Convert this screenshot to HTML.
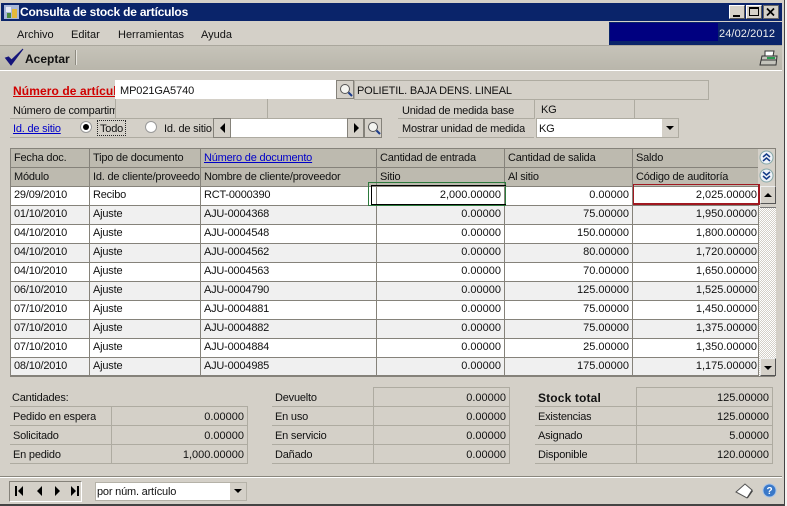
<!DOCTYPE html>
<html><head><meta charset="utf-8"><style>
html,body{margin:0;padding:0}
body{width:787px;height:506px;overflow:hidden;position:relative;background:#d4d0c8;font:11px "Liberation Sans",sans-serif;letter-spacing:-.2px;color:#111}
.a{position:absolute;box-sizing:border-box}
.t{position:absolute;white-space:nowrap;overflow:hidden;line-height:14px}
.b{position:absolute;box-sizing:border-box;border:1px solid #aeaba1}
.r{text-align:right;letter-spacing:0}
.btn{position:absolute;box-sizing:border-box;background:#d4d0c8;border:1px solid #85827a}
table{position:absolute;left:10px;top:148px;border-collapse:collapse;table-layout:fixed;width:748px}
td{box-sizing:border-box;height:19px;padding:1px 0 0 3px;border:1px solid #85827a;white-space:nowrap;overflow:hidden;line-height:14px;background:#fff;vertical-align:top}
tr.h td{background:#bdbaaf;padding-top:2px}
tr.g td{background:#f0f0f0}
td.n{text-align:right;padding:1px 3px 0 0;letter-spacing:0}
td.n:last-child{padding-right:1px}
a{color:#0000c8;text-decoration:underline}
svg{position:absolute;overflow:visible}
</style></head><body>
<div class="a" style="left:0;top:0;width:787px;height:3px;background:#d4d0c8"></div>
<div class="a" style="left:1px;top:3px;width:781px;height:18px;background:#0a246a"></div>
<svg style="left:4px;top:4px" width="16" height="16"><rect x="0" y="1" width="15" height="14" fill="#a9b8d8"/><rect x="2" y="3" width="5" height="5" fill="#e6eaf5"/><rect x="8" y="5" width="5" height="9" fill="#e2b83a"/><rect x="3" y="9" width="4" height="5" fill="#4b8a3c"/></svg>
<div class="t" style="left:20px;top:5px;color:#fff;font-weight:bold;font-size:12px">Consulta de stock de artículos</div>
<div class="btn" style="left:729px;top:5px;width:16px;height:14px;border-color:#fff #555 #555 #fff"><div class="a" style="left:3px;top:9px;width:7px;height:2px;background:#000"></div></div>
<div class="btn" style="left:746px;top:5px;width:16px;height:14px;border-color:#fff #555 #555 #fff"><div class="a" style="left:2px;top:1px;width:10px;height:9px;border:1px solid #000;border-top-width:2px"></div></div>
<svg style="left:763px;top:5px" width="16" height="14"><rect x=".5" y=".5" width="15" height="13" fill="#d4d0c8" stroke="#666"/><path d="M4 3.500l7 7M11 3.500l-7 7" stroke="#000" stroke-width="1.700"/></svg>
<div class="a" style="left:782px;top:0;width:2px;height:506px;background:#d4d0c8"></div>
<div class="a" style="left:784px;top:0;width:1px;height:506px;background:#444"></div>
<div class="a" style="left:785px;top:0;width:2px;height:506px;background:#f4f4f2"></div>

<div class="t" style="left:17px;top:28px;letter-spacing:0">Archivo</div>
<div class="t" style="left:71px;top:28px;letter-spacing:0">Editar</div>
<div class="t" style="left:118px;top:28px;letter-spacing:0">Herramientas</div>
<div class="t" style="left:201px;top:28px;letter-spacing:0">Ayuda</div>
<div class="a" style="left:609px;top:22px;width:173px;height:23px;background:#0a246a"></div>
<div class="a" style="left:610px;top:23px;width:108px;height:18px;background:#000080"></div>
<div class="t" style="left:719px;top:27px;color:#eee;letter-spacing:.1px">24/02/2012</div>

<div class="a" style="left:0;top:45px;width:782px;height:25px;background:linear-gradient(#c6c3b9,#b9b6ab);border-top:1px solid #aaa79d"></div>
<div class="a" style="left:0;top:70px;width:782px;height:1px;background:#fff"></div>
<svg style="left:4px;top:48px" width="22" height="20"><path d="M1.500 10 L7 17 L19 1 L7.500 12 L4.500 9 Z" fill="#14147a" stroke="#14147a"/></svg>
<div class="t" style="left:25px;top:52px;font-weight:bold;font-size:12px;letter-spacing:0">Aceptar</div>
<div class="a" style="left:75px;top:50px;width:2px;height:15px;border-left:1px solid #8d8a80;border-right:1px solid #e8e6e0"></div>
<svg style="left:759px;top:50px" width="20" height="17"><path d="M6 1h9l-1 5H6z" fill="#fff" stroke="#333"/><path d="M3 6h15l-1 9H1z" fill="#c4c4bc" stroke="#333"/><path d="M2 10h15" stroke="#333"/><rect x="8" y="7" width="8" height="2" fill="#2a9a50"/></svg>

<div class="t" style="left:13px;top:84px;width:102px;color:#d00000;font-weight:bold;font-size:12px;letter-spacing:.1px;text-decoration:underline">Número de artículo</div>
<div class="a" style="left:115px;top:80px;width:221px;height:19px;background:#fff"></div>
<div class="t" style="left:120px;top:84px;letter-spacing:-.1px">MP021GA5740</div>
<div class="btn" style="left:336px;top:80px;width:18px;height:19px"><svg style="left:2px;top:2px" width="14" height="14"><circle cx="6" cy="6" r="4.500" fill="#f4f4f0" stroke="#555"/><path d="M9.500 9.500l3.500 3.500" stroke="#1c3c8c" stroke-width="2"/></svg></div>
<div class="b" style="left:354px;top:80px;width:355px;height:20px"></div>
<div class="t" style="left:357px;top:84px;letter-spacing:-.15px">POLIETIL. BAJA DENS. LINEAL</div>

<div class="t" style="left:13px;top:104px;width:102px">Número de compartimiento</div>
<div class="b" style="left:115px;top:99px;width:153px;height:20px;border-top:0"></div>
<div class="t" style="left:402px;top:104px">Unidad de medida base</div>
<div class="b" style="left:534px;top:99px;width:101px;height:20px;border-top:0;border-bottom:0"></div>
<div class="t" style="left:541px;top:103px">KG</div>
<div class="a" style="left:398px;top:118px;width:136px;height:20px;border-top:1px solid #aeaba1;border-bottom:1px solid #aeaba1"></div>
<div class="a" style="left:10px;top:118px;width:372px;height:20px;border-top:1px solid #aeaba1;border-bottom:1px solid #aeaba1"></div>
<div class="t" style="left:13px;top:122px"><a>Id. de sitio</a></div>
<svg style="left:80px;top:121px" width="13" height="13"><circle cx="6" cy="6" r="5.500" fill="#fff" stroke="#999"/><circle cx="6" cy="6" r="3" fill="#000"/></svg>
<div class="a" style="left:97px;top:120px;width:29px;height:16px;border:1px dotted #222"></div>
<div class="t" style="left:100px;top:122px">Todo</div>
<svg style="left:145px;top:121px" width="13" height="13"><circle cx="6" cy="6" r="5.500" fill="#fff" stroke="#999"/></svg>
<div class="t" style="left:164px;top:122px;width:50px">Id. de sitio</div>
<div class="btn" style="left:213px;top:118px;width:18px;height:20px"><svg style="left:5px;top:4px" width="8" height="10"><path d="M6 0v10L1 5z" fill="#000"/></svg></div>
<div class="a" style="left:231px;top:119px;width:116px;height:18px;background:#fff"></div>
<div class="btn" style="left:347px;top:118px;width:17px;height:20px"><svg style="left:5px;top:4px" width="8" height="10"><path d="M1 0v10l5-5z" fill="#000"/></svg></div>
<div class="btn" style="left:364px;top:118px;width:18px;height:20px"><svg style="left:2px;top:2px" width="14" height="14"><circle cx="6" cy="6" r="4.500" fill="#f4f4f0" stroke="#555"/><path d="M9.500 9.500l3.500 3.500" stroke="#1c3c8c" stroke-width="2"/></svg></div>
<div class="t" style="left:402px;top:122px">Mostrar unidad de medida</div>
<div class="a" style="left:536px;top:118px;width:143px;height:20px;background:#fff;border:1px solid #aeaba1"></div>
<div class="t" style="left:539px;top:122px">KG</div>
<div class="a" style="left:662px;top:119px;width:16px;height:18px;background:#d4d0c8"></div>
<svg style="left:666px;top:126px" width="9" height="5"><path d="M0 0h8L4 4z" fill="#000"/></svg>

<table><colgroup><col style="width:79px"><col style="width:111px"><col style="width:176px"><col style="width:128px"><col style="width:128px"><col style="width:126px"></colgroup>
<tr class="h"><td>Fecha doc.</td><td>Tipo de documento</td><td><a>Número de documento</a></td><td>Cantidad de entrada</td><td>Cantidad de salida</td><td>Saldo</td></tr>
<tr class="h"><td>Módulo</td><td>Id. de cliente/proveedor</td><td>Nombre de cliente/proveedor</td><td>Sitio</td><td>Al sitio</td><td>Código de auditoría</td></tr>
<tr><td>29/09/2010</td><td>Recibo</td><td>RCT-0000390</td><td class="n">2,000.00000</td><td class="n">0.00000</td><td class="n">2,025.00000</td></tr>
<tr class="g"><td>01/10/2010</td><td>Ajuste</td><td>AJU-0004368</td><td class="n">0.00000</td><td class="n">75.00000</td><td class="n">1,950.00000</td></tr>
<tr><td>04/10/2010</td><td>Ajuste</td><td>AJU-0004548</td><td class="n">0.00000</td><td class="n">150.00000</td><td class="n">1,800.00000</td></tr>
<tr class="g"><td>04/10/2010</td><td>Ajuste</td><td>AJU-0004562</td><td class="n">0.00000</td><td class="n">80.00000</td><td class="n">1,720.00000</td></tr>
<tr><td>04/10/2010</td><td>Ajuste</td><td>AJU-0004563</td><td class="n">0.00000</td><td class="n">70.00000</td><td class="n">1,650.00000</td></tr>
<tr class="g"><td>06/10/2010</td><td>Ajuste</td><td>AJU-0004790</td><td class="n">0.00000</td><td class="n">125.00000</td><td class="n">1,525.00000</td></tr>
<tr><td>07/10/2010</td><td>Ajuste</td><td>AJU-0004881</td><td class="n">0.00000</td><td class="n">75.00000</td><td class="n">1,450.00000</td></tr>
<tr class="g"><td>07/10/2010</td><td>Ajuste</td><td>AJU-0004882</td><td class="n">0.00000</td><td class="n">75.00000</td><td class="n">1,375.00000</td></tr>
<tr><td>07/10/2010</td><td>Ajuste</td><td>AJU-0004884</td><td class="n">0.00000</td><td class="n">25.00000</td><td class="n">1,350.00000</td></tr>
<tr class="g"><td>08/10/2010</td><td>Ajuste</td><td>AJU-0004985</td><td class="n">0.00000</td><td class="n">175.00000</td><td class="n">1,175.00000</td></tr>
</table>
<div class="a" style="left:10px;top:375px;width:765px;height:2px;background:#85827a"></div>
<div class="a" style="left:758px;top:148px;width:18px;height:38px;background:#d4d0c8;border-top:1px solid #85827a;border-right:1px solid #85827a"></div>
<svg style="left:759px;top:150px" width="15" height="34"><circle cx="7.500" cy="7.500" r="6.500" fill="#eef2f8" stroke="#8aa"/><path d="M4 7l3.500-3L11 7M4 11l3.500-3L11 11" fill="none" stroke="#123a88" stroke-width="1.500"/><circle cx="7.500" cy="25.500" r="6.500" fill="#eef2f8" stroke="#8aa"/><path d="M4 22l3.500 3L11 22M4 26l3.500 3L11 26" fill="none" stroke="#123a88" stroke-width="1.500"/></svg>
<div class="a" style="left:759px;top:186px;width:17px;height:190px;background:repeating-conic-gradient(#fff 0 25%,#d4d0c8 0 50%) 0 0/2px 2px"></div>
<div class="btn" style="left:760px;top:186px;width:16px;height:18px;border-color:#eee #555 #555 #eee"><svg style="left:3px;top:6px" width="9" height="5"><path d="M0 4h8L4 0z" fill="#000"/></svg></div>
<div class="a" style="left:760px;top:204px;width:16px;height:4px;background:#d4d0c8;border-bottom:1px solid #777"></div>
<div class="btn" style="left:760px;top:358px;width:16px;height:18px;border-color:#eee #555 #555 #eee"><svg style="left:3px;top:7px" width="9" height="5"><path d="M0 0h8L4 4z" fill="#000"/></svg></div>
<div class="a" style="left:368px;top:182px;width:138px;height:24px;border:1px solid #2c7a3c"></div>
<div class="a" style="left:371px;top:185px;width:135px;height:20px;border:1px solid #000;border-right:0"></div>
<div class="a" style="left:633px;top:184px;width:127px;height:21px;border:1px solid #a01820;border-width:1px 2px 2px 1px"></div>

<div class="t" style="left:12px;top:391px">Cantidades:</div>
<div class="a" style="left:10px;top:406px;width:238px;height:58px;border-top:1px solid #aeaba1;border-bottom:1px solid #aeaba1"></div>
<div class="a" style="left:10px;top:425px;width:238px;height:20px;border-top:1px solid #aeaba1;border-bottom:1px solid #aeaba1"></div>
<div class="a" style="left:111px;top:406px;width:137px;height:58px;border:1px solid #aeaba1"></div>
<div class="t" style="left:13px;top:410px">Pedido en espera</div>
<div class="t" style="left:13px;top:429px">Solicitado</div>
<div class="t" style="left:13px;top:448px">En pedido</div>
<div class="t r" style="left:111px;top:410px;width:133px">0.00000</div>
<div class="t r" style="left:111px;top:429px;width:133px">0.00000</div>
<div class="t r" style="left:111px;top:448px;width:133px">1,000.00000</div>

<div class="a" style="left:272px;top:406px;width:238px;height:58px;border-top:1px solid #aeaba1;border-bottom:1px solid #aeaba1"></div>
<div class="a" style="left:272px;top:425px;width:238px;height:20px;border-top:1px solid #aeaba1;border-bottom:1px solid #aeaba1"></div>
<div class="a" style="left:373px;top:387px;width:137px;height:77px;border:1px solid #aeaba1"></div>
<div class="t" style="left:275px;top:391px">Devuelto</div>
<div class="t" style="left:275px;top:410px">En uso</div>
<div class="t" style="left:275px;top:429px">En servicio</div>
<div class="t" style="left:275px;top:448px">Dañado</div>
<div class="t r" style="left:373px;top:391px;width:133px">0.00000</div>
<div class="t r" style="left:373px;top:410px;width:133px">0.00000</div>
<div class="t r" style="left:373px;top:429px;width:133px">0.00000</div>
<div class="t r" style="left:373px;top:448px;width:133px">0.00000</div>

<div class="a" style="left:535px;top:406px;width:238px;height:58px;border-top:1px solid #aeaba1;border-bottom:1px solid #aeaba1"></div>
<div class="a" style="left:535px;top:425px;width:238px;height:20px;border-top:1px solid #aeaba1;border-bottom:1px solid #aeaba1"></div>
<div class="a" style="left:636px;top:387px;width:137px;height:77px;border:1px solid #aeaba1"></div>
<div class="t" style="left:538px;top:391px;font-weight:bold;font-size:12px;letter-spacing:.15px">Stock total</div>
<div class="t" style="left:538px;top:410px">Existencias</div>
<div class="t" style="left:538px;top:429px">Asignado</div>
<div class="t" style="left:538px;top:448px">Disponible</div>
<div class="t r" style="left:636px;top:391px;width:133px">125.00000</div>
<div class="t r" style="left:636px;top:410px;width:133px">125.00000</div>
<div class="t r" style="left:636px;top:429px;width:133px">5.00000</div>
<div class="t r" style="left:636px;top:448px;width:133px">120.00000</div>

<div class="a" style="left:0;top:476px;width:782px;height:2px;border-top:1px solid #8a877e;border-bottom:1px solid #fff"></div>
<div class="a" style="left:9px;top:481px;width:73px;height:21px;border:1px solid #85827a;border-right-color:#fff;border-bottom-color:#fff"></div>
<svg style="left:15px;top:486px" width="64" height="11"><path d="M0 0h2v10H0zM8 0v10L3 5zM27 0v10L22 5zM40 0v10l5-5zM56 0v10l5-5zM62 0h2v10h-2z" fill="#000"/></svg>
<div class="a" style="left:95px;top:482px;width:152px;height:19px;background:#fff;border:1px solid #b5b2a8"></div>
<div class="t" style="left:97px;top:485px">por núm. artículo</div>
<div class="a" style="left:230px;top:483px;width:16px;height:17px;background:#d4d0c8"></div>
<svg style="left:234px;top:489px" width="9" height="5"><path d="M0 0h8L4 4z" fill="#000"/></svg>
<svg style="left:735px;top:483px" width="18" height="16"><path d="M1 9L10 1l7 6-5 8z" fill="#fff" stroke="#555"/><path d="M12 15l5-8 1 1-5 7z" fill="#444"/></svg>
<svg style="left:762px;top:483px" width="15" height="15"><circle cx="7.500" cy="7.500" r="6.500" fill="#3a78c8" stroke="#a8c4e8"/><text x="4.500" y="11" font-size="10" font-weight="bold" fill="#fff" font-family="Liberation Sans">?</text></svg>
<div class="a" style="left:0;top:504px;width:785px;height:2px;background:#444"></div>
</body></html>
